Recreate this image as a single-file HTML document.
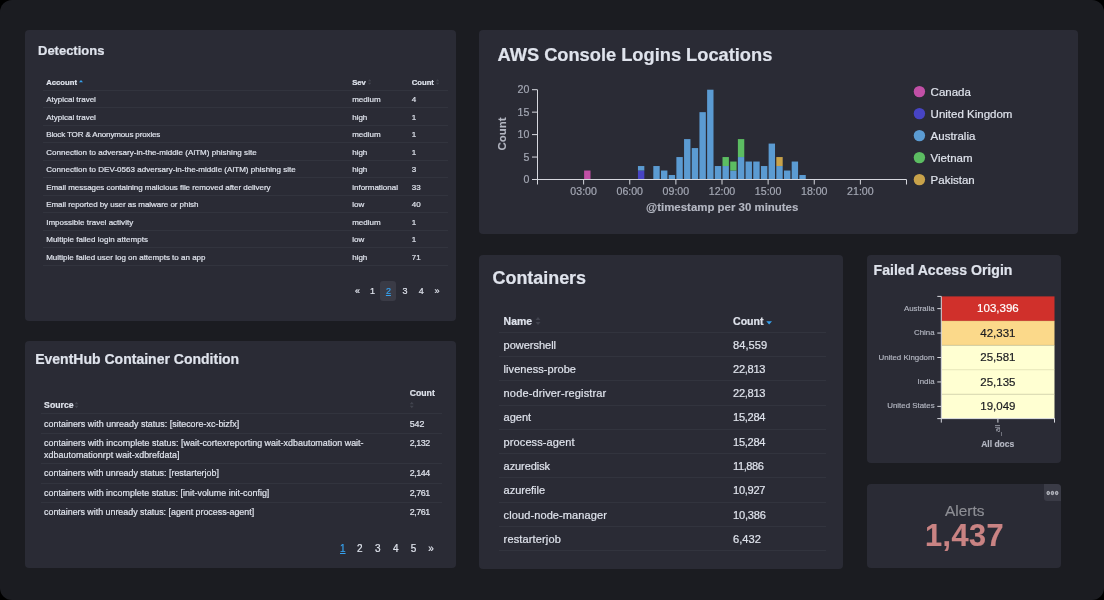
<!DOCTYPE html>
<html lang="en"><head><meta charset="utf-8"><title>Dashboard</title>
<style>
html,body{margin:0;padding:0;background:#000;}
body{width:1104px;height:600px;overflow:hidden;position:relative;font-family:"Liberation Sans",Arial,sans-serif;color:#dfe3ec;}
#page{position:absolute;left:0;top:0;width:1104px;height:600px;background:#1b1c21;border-radius:12px;overflow:hidden;}
.panel{position:absolute;background:#2a2b35;border-radius:4px;}
.t{position:absolute;white-space:nowrap;line-height:1;-webkit-text-stroke:0.2px currentColor;}
.b{font-weight:700;}
.hl{position:absolute;height:1px;background:#32343e;}
svg{position:absolute;left:0;top:0;overflow:visible;}
svg text{font-family:"Liberation Sans",Arial,sans-serif;}
</style></head><body><div id="page"><div id="fx" style="position:absolute;left:0;top:0;width:1104px;height:600px;will-change:transform;">
<div class="panel" style="left:25px;top:30px;width:431px;height:290.5px;"></div>
<div class="t b" style="left:38.00px;top:44.10px;font-size:13px;letter-spacing:-0.007px;">Detections</div>
<div class="t b" style="left:46.20px;top:79.15px;font-size:7.7px;">Account</div>
<svg width="1104" height="600"><path d="M79 82.3 L81 80 L83 82.3 Z" fill="#36a2ef"/></svg>
<div class="t b" style="left:352.20px;top:79.15px;font-size:7.7px;">Sev</div>
<svg width="1104" height="600"><path d="M367.85 81.37 L369.60 79.20 L371.35 81.37 Z M367.85 82.63 L369.60 84.80 L371.35 82.63 Z" fill="#41434e"/></svg>
<div class="t b" style="left:411.70px;top:79.15px;font-size:7.7px;">Count</div>
<svg width="1104" height="600"><path d="M435.85 81.37 L437.60 79.20 L439.35 81.37 Z M435.85 82.63 L437.60 84.80 L439.35 82.63 Z" fill="#41434e"/></svg>
<div class="hl" style="left:43.00px;width:404.50px;top:89.50px;"></div>
<div class="t" style="left:46.20px;top:96.40px;font-size:8px;letter-spacing:-0.006px;">Atypical travel</div>
<div class="t" style="left:352.20px;top:96.40px;font-size:8px;">medium</div>
<div class="t" style="left:411.70px;top:96.40px;font-size:8px;">4</div>
<div class="hl" style="left:43.00px;width:404.50px;top:107.00px;"></div>
<div class="t" style="left:46.20px;top:113.90px;font-size:8px;letter-spacing:-0.006px;">Atypical travel</div>
<div class="t" style="left:352.20px;top:113.90px;font-size:8px;">high</div>
<div class="t" style="left:411.70px;top:113.90px;font-size:8px;">1</div>
<div class="hl" style="left:43.00px;width:404.50px;top:124.50px;"></div>
<div class="t" style="left:46.20px;top:131.40px;font-size:8px;letter-spacing:-0.137px;">Block TOR &amp; Anonymous proxies</div>
<div class="t" style="left:352.20px;top:131.40px;font-size:8px;">medium</div>
<div class="t" style="left:411.70px;top:131.40px;font-size:8px;">1</div>
<div class="hl" style="left:43.00px;width:404.50px;top:142.00px;"></div>
<div class="t" style="left:46.20px;top:148.90px;font-size:8px;letter-spacing:0.034px;">Connection to adversary-in-the-middle (AiTM) phishing site</div>
<div class="t" style="left:352.20px;top:148.90px;font-size:8px;">high</div>
<div class="t" style="left:411.70px;top:148.90px;font-size:8px;">1</div>
<div class="hl" style="left:43.00px;width:404.50px;top:159.50px;"></div>
<div class="t" style="left:46.20px;top:166.40px;font-size:8px;letter-spacing:0.035px;">Connection to DEV-0563 adversary-in-the-middle (AiTM) phishing site</div>
<div class="t" style="left:352.20px;top:166.40px;font-size:8px;">high</div>
<div class="t" style="left:411.70px;top:166.40px;font-size:8px;">3</div>
<div class="hl" style="left:43.00px;width:404.50px;top:177.00px;"></div>
<div class="t" style="left:46.20px;top:183.90px;font-size:8px;letter-spacing:-0.039px;">Email messages containing malicious file removed after delivery</div>
<div class="t" style="left:352.20px;top:183.90px;font-size:8px;">informational</div>
<div class="t" style="left:411.70px;top:183.90px;font-size:8px;">33</div>
<div class="hl" style="left:43.00px;width:404.50px;top:194.50px;"></div>
<div class="t" style="left:46.20px;top:201.40px;font-size:8px;letter-spacing:-0.048px;">Email reported by user as malware or phish</div>
<div class="t" style="left:352.20px;top:201.40px;font-size:8px;">low</div>
<div class="t" style="left:411.70px;top:201.40px;font-size:8px;">40</div>
<div class="hl" style="left:43.00px;width:404.50px;top:212.00px;"></div>
<div class="t" style="left:46.20px;top:218.90px;font-size:8px;letter-spacing:0.011px;">Impossible travel activity</div>
<div class="t" style="left:352.20px;top:218.90px;font-size:8px;">medium</div>
<div class="t" style="left:411.70px;top:218.90px;font-size:8px;">1</div>
<div class="hl" style="left:43.00px;width:404.50px;top:229.50px;"></div>
<div class="t" style="left:46.20px;top:236.40px;font-size:8px;letter-spacing:0.028px;">Multiple failed login attempts</div>
<div class="t" style="left:352.20px;top:236.40px;font-size:8px;">low</div>
<div class="t" style="left:411.70px;top:236.40px;font-size:8px;">1</div>
<div class="hl" style="left:43.00px;width:404.50px;top:247.00px;"></div>
<div class="t" style="left:46.20px;top:253.90px;font-size:8px;letter-spacing:0.002px;">Multiple failed user log on attempts to an app</div>
<div class="t" style="left:352.20px;top:253.90px;font-size:8px;">high</div>
<div class="t" style="left:411.70px;top:253.90px;font-size:8px;">71</div>
<div class="hl" style="left:43.00px;width:404.50px;top:264.50px;"></div>
<div style="position:absolute;left:380px;top:281px;width:16.3px;height:20.3px;background:#3a3b46;border-radius:3px;"></div>
<div class="t" style="left:157.60px;width:400px;text-align:center;top:287.40px;font-size:9px;">«</div>
<div class="t" style="left:172.60px;width:400px;text-align:center;top:287.40px;font-size:9px;">1</div>
<div class="t" style="left:204.90px;width:400px;text-align:center;top:287.40px;font-size:9px;">3</div>
<div class="t" style="left:221.30px;width:400px;text-align:center;top:287.40px;font-size:9px;">4</div>
<div class="t" style="left:237.00px;width:400px;text-align:center;top:287.40px;font-size:9px;">»</div>
<div class="t" style="left:188.40px;width:400px;text-align:center;top:287.40px;font-size:9px;color:#36a2ef;text-decoration:underline;">2</div>
<div class="panel" style="left:25px;top:341px;width:431px;height:226.70000000000005px;"></div>
<div class="t b" style="left:35.20px;top:352.20px;font-size:14px;letter-spacing:0.008px;">EventHub Container Condition</div>
<div class="t b" style="left:44.10px;top:401.35px;font-size:8.7px;">Source</div>
<svg width="1104" height="600"><path d="M74.50 404.28 L76.50 401.80 L78.50 404.28 Z M74.50 405.72 L76.50 408.20 L78.50 405.72 Z" fill="#41434e"/></svg>
<div class="t b" style="left:409.70px;top:388.65px;font-size:8.7px;">Count</div>
<svg width="1104" height="600"><path d="M409.80 404.28 L411.80 401.80 L413.80 404.28 Z M409.80 405.72 L411.80 408.20 L413.80 405.72 Z" fill="#41434e"/></svg>
<div class="hl" style="left:40.60px;width:401.90px;top:412.90px;"></div>
<div class="t" style="left:44.10px;top:419.55px;font-size:8.9px;letter-spacing:0.026px;">containers with unready status: [sitecore-xc-bizfx]</div>
<div class="t" style="left:409.70px;top:419.55px;font-size:8.9px;letter-spacing:-0.038px;">542</div>
<div class="hl" style="left:40.60px;width:401.90px;top:432.50px;"></div>
<div class="t" style="left:44.10px;top:439.25px;font-size:8.9px;letter-spacing:0.035px;">containers with incomplete status: [wait-cortexreporting wait-xdbautomation wait-</div>
<div class="t" style="left:409.70px;top:439.25px;font-size:8.9px;letter-spacing:-0.444px;">2,132</div>
<div class="hl" style="left:40.60px;width:401.90px;top:463.00px;"></div>
<div class="t" style="left:44.10px;top:468.85px;font-size:8.9px;letter-spacing:0.003px;">containers with unready status: [restarterjob]</div>
<div class="t" style="left:409.70px;top:468.85px;font-size:8.9px;letter-spacing:-0.444px;">2,144</div>
<div class="hl" style="left:40.60px;width:401.90px;top:482.50px;"></div>
<div class="t" style="left:44.10px;top:489.05px;font-size:8.9px;letter-spacing:0.022px;">containers with incomplete status: [init-volume init-config]</div>
<div class="t" style="left:409.70px;top:489.05px;font-size:8.9px;letter-spacing:-0.444px;">2,761</div>
<div class="hl" style="left:40.60px;width:401.90px;top:501.80px;"></div>
<div class="t" style="left:44.10px;top:508.15px;font-size:8.9px;letter-spacing:-0.012px;">containers with unready status: [agent process-agent]</div>
<div class="t" style="left:409.70px;top:508.15px;font-size:8.9px;letter-spacing:-0.444px;">2,761</div>
<div class="t" style="left:44.10px;top:450.55px;font-size:8.9px;letter-spacing:0.037px;">xdbautomationrpt wait-xdbrefdata]</div>
<div class="t" style="left:159.70px;width:400px;text-align:center;top:543.60px;font-size:10px;">2</div>
<div class="t" style="left:177.70px;width:400px;text-align:center;top:543.60px;font-size:10px;">3</div>
<div class="t" style="left:195.70px;width:400px;text-align:center;top:543.60px;font-size:10px;">4</div>
<div class="t" style="left:213.60px;width:400px;text-align:center;top:543.60px;font-size:10px;">5</div>
<div class="t" style="left:231.00px;width:400px;text-align:center;top:543.60px;font-size:10px;">»</div>
<div class="t" style="left:142.80px;width:400px;text-align:center;top:543.60px;font-size:10px;color:#36a2ef;text-decoration:underline;">1</div>
<div class="panel" style="left:478.5px;top:30px;width:599.5px;height:204.3px;"></div>
<div class="t b" style="left:497.50px;top:46.08px;font-size:18.25px;letter-spacing:0.001px;">AWS Console Logins Locations</div>
<svg width="1104" height="600" shape-rendering="auto">
<rect x="584.12" y="170.52" width="6.39" height="8.98" fill="#c14fa6"/>
<rect x="637.94" y="170.52" width="6.39" height="8.98" fill="#4744c4"/>
<rect x="637.94" y="166.03" width="6.39" height="4.49" fill="#5b9bd2"/>
<rect x="653.31" y="166.03" width="6.39" height="13.47" fill="#5b9bd2"/>
<rect x="661.00" y="170.52" width="6.39" height="8.98" fill="#5b9bd2"/>
<rect x="668.69" y="175.01" width="6.39" height="4.49" fill="#5b9bd2"/>
<rect x="676.38" y="157.05" width="6.39" height="22.45" fill="#5b9bd2"/>
<rect x="684.06" y="139.09" width="6.39" height="40.41" fill="#5b9bd2"/>
<rect x="691.75" y="148.07" width="6.39" height="31.43" fill="#5b9bd2"/>
<rect x="699.44" y="112.15" width="6.39" height="67.35" fill="#5b9bd2"/>
<rect x="707.12" y="89.70" width="6.39" height="89.80" fill="#5b9bd2"/>
<rect x="714.81" y="166.03" width="6.39" height="13.47" fill="#5b9bd2"/>
<rect x="722.50" y="166.03" width="6.39" height="13.47" fill="#5b9bd2"/>
<rect x="722.50" y="157.05" width="6.39" height="8.98" fill="#5cbd62"/>
<rect x="730.19" y="170.52" width="6.39" height="8.98" fill="#5b9bd2"/>
<rect x="730.19" y="161.54" width="6.39" height="8.98" fill="#5cbd62"/>
<rect x="737.88" y="157.05" width="6.39" height="22.45" fill="#5b9bd2"/>
<rect x="737.88" y="139.09" width="6.39" height="17.96" fill="#5cbd62"/>
<rect x="745.56" y="161.54" width="6.39" height="17.96" fill="#5b9bd2"/>
<rect x="753.25" y="161.54" width="6.39" height="17.96" fill="#5b9bd2"/>
<rect x="760.94" y="166.03" width="6.39" height="13.47" fill="#5b9bd2"/>
<rect x="768.62" y="143.58" width="6.39" height="35.92" fill="#5b9bd2"/>
<rect x="776.31" y="166.03" width="6.39" height="13.47" fill="#5b9bd2"/>
<rect x="776.31" y="157.05" width="6.39" height="8.98" fill="#c8a24a"/>
<rect x="784.00" y="170.52" width="6.39" height="8.98" fill="#5b9bd2"/>
<rect x="791.69" y="161.54" width="6.39" height="17.96" fill="#5b9bd2"/>
<rect x="799.38" y="175.01" width="6.39" height="4.49" fill="#5b9bd2"/>
<path d="M537.5 89.8 V184.5 M532.0 179.5 H906.5 M906.5 179.5 V184.5" stroke="#d6d8de" stroke-width="1" fill="none"/>
<path d="M532.0 157.05 H537.5" stroke="#d6d8de" stroke-width="1"/>
<path d="M532.0 134.60 H537.5" stroke="#d6d8de" stroke-width="1"/>
<path d="M532.0 112.15 H537.5" stroke="#d6d8de" stroke-width="1"/>
<path d="M532.0 89.70 H537.5" stroke="#d6d8de" stroke-width="1"/>
<path d="M583.62 179.5 V184.5" stroke="#d6d8de" stroke-width="1"/>
<path d="M629.75 179.5 V184.5" stroke="#d6d8de" stroke-width="1"/>
<path d="M675.88 179.5 V184.5" stroke="#d6d8de" stroke-width="1"/>
<path d="M722.00 179.5 V184.5" stroke="#d6d8de" stroke-width="1"/>
<path d="M768.12 179.5 V184.5" stroke="#d6d8de" stroke-width="1"/>
<path d="M814.25 179.5 V184.5" stroke="#d6d8de" stroke-width="1"/>
<path d="M860.38 179.5 V184.5" stroke="#d6d8de" stroke-width="1"/>
<text x="529.3" y="183.10" font-size="10.6" fill="#a3a7b3" stroke="#a3a7b3" stroke-width="0.2" text-anchor="end">0</text>
<text x="529.3" y="160.65" font-size="10.6" fill="#a3a7b3" stroke="#a3a7b3" stroke-width="0.2" text-anchor="end">5</text>
<text x="529.3" y="138.20" font-size="10.6" fill="#a3a7b3" stroke="#a3a7b3" stroke-width="0.2" text-anchor="end">10</text>
<text x="529.3" y="115.75" font-size="10.6" fill="#a3a7b3" stroke="#a3a7b3" stroke-width="0.2" text-anchor="end">15</text>
<text x="529.3" y="93.30" font-size="10.6" fill="#a3a7b3" stroke="#a3a7b3" stroke-width="0.2" text-anchor="end">20</text>
<text x="583.62" y="194.5" font-size="10.6" fill="#a3a7b3" stroke="#a3a7b3" stroke-width="0.2" text-anchor="middle">03:00</text>
<text x="629.75" y="194.5" font-size="10.6" fill="#a3a7b3" stroke="#a3a7b3" stroke-width="0.2" text-anchor="middle">06:00</text>
<text x="675.88" y="194.5" font-size="10.6" fill="#a3a7b3" stroke="#a3a7b3" stroke-width="0.2" text-anchor="middle">09:00</text>
<text x="722.00" y="194.5" font-size="10.6" fill="#a3a7b3" stroke="#a3a7b3" stroke-width="0.2" text-anchor="middle">12:00</text>
<text x="768.12" y="194.5" font-size="10.6" fill="#a3a7b3" stroke="#a3a7b3" stroke-width="0.2" text-anchor="middle">15:00</text>
<text x="814.25" y="194.5" font-size="10.6" fill="#a3a7b3" stroke="#a3a7b3" stroke-width="0.2" text-anchor="middle">18:00</text>
<text x="860.38" y="194.5" font-size="10.6" fill="#a3a7b3" stroke="#a3a7b3" stroke-width="0.2" text-anchor="middle">21:00</text>
<text x="722.2" y="211" font-size="11.45" font-weight="700" fill="#b4b7c2" stroke="#b4b7c2" stroke-width="0.15" text-anchor="middle">@timestamp per 30 minutes</text>
<text transform="translate(506,134) rotate(-90)" font-size="11.45" font-weight="700" fill="#b4b7c2" stroke="#b4b7c2" stroke-width="0.15" text-anchor="middle">Count</text>
<circle cx="919.4" cy="91.60" r="5.7" fill="#c14fa6"/>
<text x="930.6" y="95.70" font-size="11.5" fill="#dfe3ec" stroke="#dfe3ec" stroke-width="0.2">Canada</text>
<circle cx="919.4" cy="113.60" r="5.7" fill="#4744c4"/>
<text x="930.6" y="117.70" font-size="11.5" fill="#dfe3ec" stroke="#dfe3ec" stroke-width="0.2">United Kingdom</text>
<circle cx="919.4" cy="135.60" r="5.7" fill="#5b9bd2"/>
<text x="930.6" y="139.70" font-size="11.5" fill="#dfe3ec" stroke="#dfe3ec" stroke-width="0.2">Australia</text>
<circle cx="919.4" cy="157.60" r="5.7" fill="#5cbd62"/>
<text x="930.6" y="161.70" font-size="11.5" fill="#dfe3ec" stroke="#dfe3ec" stroke-width="0.2">Vietnam</text>
<circle cx="919.4" cy="179.60" r="5.7" fill="#c8a24a"/>
<text x="930.6" y="183.70" font-size="11.5" fill="#dfe3ec" stroke="#dfe3ec" stroke-width="0.2">Pakistan</text>
</svg>
<div class="panel" style="left:478.5px;top:255px;width:364.79999999999995px;height:314px;"></div>
<div class="t b" style="left:492.60px;top:269.85px;font-size:17.9px;letter-spacing:-0.005px;">Containers</div>
<div class="t b" style="left:503.60px;top:316.67px;font-size:10.45px;">Name</div>
<svg width="1104" height="600"><path d="M535.50 320.10 L538.00 317.00 L540.50 320.10 Z M535.50 321.90 L538.00 325.00 L540.50 321.90 Z" fill="#41434e"/></svg>
<div class="t b" style="left:733.00px;top:315.50px;font-size:10.6px;">Count</div>
<svg width="1104" height="600"><path d="M766.3 321.3 H772 L769.15 324.6 Z" fill="#36a2ef"/></svg>
<div class="hl" style="left:499.40px;width:326.80px;top:331.90px;"></div>
<div class="t" style="left:503.60px;top:339.60px;font-size:11px;letter-spacing:-0.019px;">powershell</div>
<div class="t" style="left:733.00px;top:339.55px;font-size:11.1px;letter-spacing:0.044px;">84,559</div>
<div class="hl" style="left:499.40px;width:326.80px;top:356.14px;"></div>
<div class="t" style="left:503.60px;top:363.84px;font-size:11px;letter-spacing:0.061px;">liveness-probe</div>
<div class="t" style="left:733.00px;top:363.79px;font-size:11.1px;letter-spacing:-0.290px;">22,813</div>
<div class="hl" style="left:499.40px;width:326.80px;top:380.38px;"></div>
<div class="t" style="left:503.60px;top:388.08px;font-size:11px;letter-spacing:0.150px;">node-driver-registrar</div>
<div class="t" style="left:733.00px;top:388.03px;font-size:11.1px;letter-spacing:-0.290px;">22,813</div>
<div class="hl" style="left:499.40px;width:326.80px;top:404.62px;"></div>
<div class="t" style="left:503.60px;top:412.32px;font-size:11px;letter-spacing:0.014px;">agent</div>
<div class="t" style="left:733.00px;top:412.27px;font-size:11.1px;letter-spacing:-0.290px;">15,284</div>
<div class="hl" style="left:499.40px;width:326.80px;top:428.86px;"></div>
<div class="t" style="left:503.60px;top:436.56px;font-size:11px;letter-spacing:0.099px;">process-agent</div>
<div class="t" style="left:733.00px;top:436.51px;font-size:11.1px;letter-spacing:-0.290px;">15,284</div>
<div class="hl" style="left:499.40px;width:326.80px;top:453.10px;"></div>
<div class="t" style="left:503.60px;top:460.80px;font-size:11px;letter-spacing:-0.075px;">azuredisk</div>
<div class="t" style="left:733.00px;top:460.75px;font-size:11.1px;letter-spacing:-0.418px;">11,886</div>
<div class="hl" style="left:499.40px;width:326.80px;top:477.34px;"></div>
<div class="t" style="left:503.60px;top:485.04px;font-size:11px;letter-spacing:-0.020px;">azurefile</div>
<div class="t" style="left:733.00px;top:484.99px;font-size:11.1px;letter-spacing:-0.290px;">10,927</div>
<div class="hl" style="left:499.40px;width:326.80px;top:501.58px;"></div>
<div class="t" style="left:503.60px;top:509.98px;font-size:11px;letter-spacing:0.105px;">cloud-node-manager</div>
<div class="t" style="left:733.00px;top:509.93px;font-size:11.1px;letter-spacing:-0.223px;">10,386</div>
<div class="hl" style="left:499.40px;width:326.80px;top:525.82px;"></div>
<div class="t" style="left:503.60px;top:534.22px;font-size:11px;letter-spacing:0.147px;">restarterjob</div>
<div class="t" style="left:733.00px;top:534.17px;font-size:11.1px;letter-spacing:0.047px;">6,432</div>
<div class="hl" style="left:499.40px;width:326.80px;top:550.06px;"></div>
<div class="panel" style="left:867.2px;top:255px;width:194.0999999999999px;height:208px;"></div>
<div class="t b" style="left:873.60px;top:263.15px;font-size:14.1px;letter-spacing:-0.005px;">Failed Access Origin</div>
<svg width="1104" height="600">
<rect x="941.3" y="296.40" width="113.20" height="24.74" fill="#d0302b"/>
<rect x="941.3" y="320.84" width="113.20" height="24.74" fill="#fbd98a"/>
<rect x="941.3" y="345.28" width="113.20" height="24.74" fill="#ffffd2"/>
<rect x="941.3" y="369.72" width="113.20" height="24.74" fill="#ffffd2"/>
<rect x="941.3" y="394.16" width="113.20" height="24.74" fill="#ffffd2"/>
<text x="997.90" y="312.32" font-size="11.5" fill="#ffffff" stroke="#ffffff" stroke-width="0.2" text-anchor="middle">103,396</text>
<text x="934.6" y="310.62" font-size="7.9" fill="#b4b7c2" stroke="#b4b7c2" stroke-width="0.15" text-anchor="end">Australia</text>
<path d="M937.3 308.62 H941.3" stroke="#d6d8de" stroke-width="1"/>
<path d="M941.3 320.84 H1054.5" stroke="rgba(60,60,40,0.18)" stroke-width="0.7"/>
<text x="997.90" y="336.76" font-size="11.5" fill="#1b1c21" stroke="#1b1c21" stroke-width="0.2" text-anchor="middle">42,331</text>
<text x="934.6" y="335.06" font-size="7.9" fill="#b4b7c2" stroke="#b4b7c2" stroke-width="0.15" text-anchor="end">China</text>
<path d="M937.3 333.06 H941.3" stroke="#d6d8de" stroke-width="1"/>
<path d="M941.3 345.28 H1054.5" stroke="rgba(60,60,40,0.18)" stroke-width="0.7"/>
<text x="997.90" y="361.20" font-size="11.5" fill="#1b1c21" stroke="#1b1c21" stroke-width="0.2" text-anchor="middle">25,581</text>
<text x="934.6" y="359.50" font-size="7.9" fill="#b4b7c2" stroke="#b4b7c2" stroke-width="0.15" text-anchor="end">United Kingdom</text>
<path d="M937.3 357.50 H941.3" stroke="#d6d8de" stroke-width="1"/>
<path d="M941.3 369.72 H1054.5" stroke="rgba(60,60,40,0.18)" stroke-width="0.7"/>
<text x="997.90" y="385.64" font-size="11.5" fill="#1b1c21" stroke="#1b1c21" stroke-width="0.2" text-anchor="middle">25,135</text>
<text x="934.6" y="383.94" font-size="7.9" fill="#b4b7c2" stroke="#b4b7c2" stroke-width="0.15" text-anchor="end">India</text>
<path d="M937.3 381.94 H941.3" stroke="#d6d8de" stroke-width="1"/>
<path d="M941.3 394.16 H1054.5" stroke="rgba(60,60,40,0.18)" stroke-width="0.7"/>
<text x="997.90" y="410.08" font-size="11.5" fill="#1b1c21" stroke="#1b1c21" stroke-width="0.2" text-anchor="middle">19,049</text>
<text x="934.6" y="408.38" font-size="7.9" fill="#b4b7c2" stroke="#b4b7c2" stroke-width="0.15" text-anchor="end">United States</text>
<path d="M937.3 406.38 H941.3" stroke="#d6d8de" stroke-width="1"/>
<path d="M937.3 296.4 H941.3 V418.60 M937.3 418.60 H1054.9 M941.3 418.60 V422.60 M997.90 418.60 V422.60 M1054.5 418.60 V422.60" stroke="#d6d8de" stroke-width="1" fill="none"/>
<text transform="translate(999.9,430.3) rotate(-90)" font-size="7.2" fill="#b4b7c2" text-anchor="middle">_all</text>
<text x="997.7" y="446.8" font-size="8.5" font-weight="700" fill="#b4b7c2" stroke="#b4b7c2" stroke-width="0.15" text-anchor="middle">All docs</text>
</svg>
<div class="panel" style="left:867.2px;top:484px;width:194.0999999999999px;height:83.60000000000002px;"></div>
<div style="position:absolute;left:1044.2px;top:484px;width:17.1px;height:17px;background:#3a3b46;border-radius:0 4px 0 3px;"></div>
<svg width="1104" height="600"><rect x="1047.1" y="491.45" width="2.3" height="3.1" rx="0.9" fill="#7d7f89" stroke="#cfd1d8" stroke-width="0.9"/><rect x="1051.3" y="491.45" width="2.3" height="3.1" rx="0.9" fill="#7d7f89" stroke="#cfd1d8" stroke-width="0.9"/><rect x="1055.5" y="491.45" width="2.3" height="3.1" rx="0.9" fill="#7d7f89" stroke="#cfd1d8" stroke-width="0.9"/></svg>
<div class="t" style="left:764.70px;width:400px;text-align:center;top:502.50px;font-size:15.4px;color:#8d8e94;">Alerts</div>
<div class="t b" style="left:764.50px;width:400px;text-align:center;top:520.65px;font-size:30.7px;color:#c98383;letter-spacing:0.4px;">1,437</div>
</div></div></body></html>
